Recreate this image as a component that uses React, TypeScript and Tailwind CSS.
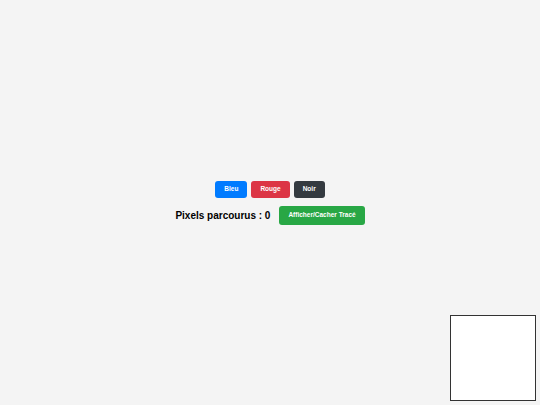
import { useState } from "react";

const colors = [
  { label: "Bleu", cls: "bg-[#007bff]" },
  { label: "Rouge", cls: "bg-[#dc3545]" },
  { label: "Noir", cls: "bg-[#343a40]" },
];

export default function App() {
  const [pixels] = useState(0);
  const [showTrace, setShowTrace] = useState(true);

  return (
    <div
      className="min-h-screen bg-[#f4f4f4] flex flex-col items-center justify-center"
      style={{ fontFamily: '"Liberation Sans", Arial, sans-serif' }}
    >
      {/* Colour picker */}
      <div className="flex gap-[4px]">
        {colors.map((c) => (
          <button
            key={c.label}
            className={`${c.cls} text-white font-bold text-[6.5px] h-[17px] px-[9px] rounded-[3px] leading-none`}
          >
            {c.label}
          </button>
        ))}
      </div>

      {/* Counter + toggle */}
      <div className="flex items-center gap-[9px] mt-[8px]">
        <span className="text-[10px] font-bold text-black">Pixels parcourus : {pixels}</span>
        <button
          onClick={() => setShowTrace(!showTrace)}
          className="bg-[#28a745] text-white font-bold text-[6.5px] h-[19px] px-[9px] rounded-[3px] leading-none"
        >
          Afficher/Cacher Tracé
        </button>
      </div>

      {/* Minimap */}
      <div className="fixed bottom-[4px] right-[4px] w-[86px] h-[86px] bg-white border border-[#333]" />
    </div>
  );
}
